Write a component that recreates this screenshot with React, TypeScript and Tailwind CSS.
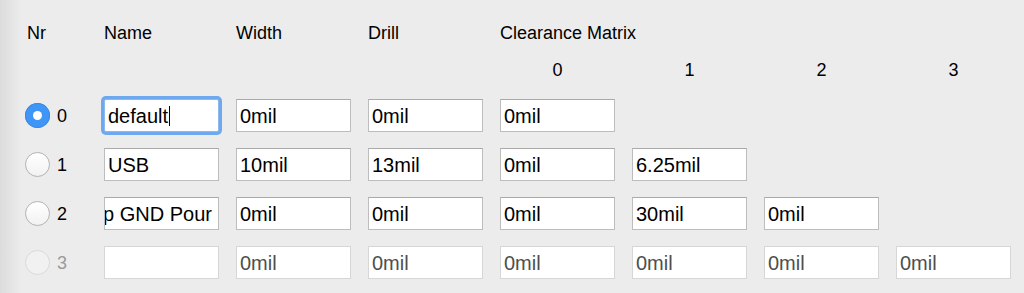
import React from "react";

type Row = {
    nr: number;
    name: string;
    width: string;
    drill: string;
    clearance: string[];
};

const rows: Row[] = [
    { nr: 0, name: "default", width: "0mil", drill: "0mil", clearance: ["0mil"] },
    { nr: 1, name: "USB", width: "10mil", drill: "13mil", clearance: ["0mil", "6.25mil"] },
    { nr: 2, name: "Top GND Pour", width: "0mil", drill: "0mil", clearance: ["0mil", "30mil", "0mil"] },
    { nr: 3, name: "", width: "0mil", drill: "0mil", clearance: ["0mil", "0mil", "0mil", "0mil"] },
];

const font = { fontFamily: '"Liberation Sans", Arial, sans-serif' };

const Field = ({
    value,
    disabled,
    focused,
    alignEnd,
}: {
    value: string;
    disabled?: boolean;
    focused?: boolean;
    alignEnd?: boolean;
}) => (
    <div
        className={
            "relative flex h-[33px] w-[115px] items-center overflow-hidden whitespace-nowrap bg-white text-[20px] leading-none " +
            (alignEnd ? "justify-end pr-[6px] " : "pl-[3px] ") +
            (focused
                ? "rounded-[2px] border border-[#8fb8ec] shadow-[0_0_0_3px_#6ea8ee] "
                : disabled
                  ? "border border-[#d6d6d6] text-[#4e4e4e] "
                  : "border border-[#bdbdbd] border-t-[#a9a9a9] text-black ")
        }
    >
        <span>{value}</span>
        {focused && <span className="ml-[1px] inline-block h-[20px] w-[1px] bg-black" />}
    </div>
);

const Radio = ({ checked, disabled }: { checked?: boolean; disabled?: boolean }) => {
    if (checked) {
        return (
            <div className="flex h-[25px] w-[25px] items-center justify-center rounded-full bg-[#3f96f6] shadow-[inset_0_0_0_1px_#3a8ae6]">
                <div className="h-[9px] w-[9px] rounded-full bg-white" />
            </div>
        );
    }
    return (
        <div
            className={
                "h-[25px] w-[25px] rounded-full " +
                (disabled
                    ? "border border-[#dadada] bg-[#f1f1f1]"
                    : "border border-[#b3b3b3] bg-gradient-to-b from-white to-[#f2f2f2]")
            }
        />
    );
};

export default function App() {
    return (
        <div
            className="h-[293px] w-[1024px] overflow-hidden bg-[linear-gradient(to_right,#dcdcdc,#ececec_22px)] pl-[25px] pt-[23px] text-black"
            style={font}
        >
            {/* headers */}
            <div className="grid h-[20px] grid-cols-[79px_132px_132px_132px_400px] text-[18px] leading-[20px]">
                <div className="pl-[2px]">Nr</div>
                <div>Name</div>
                <div>Width</div>
                <div>Drill</div>
                <div>Clearance Matrix</div>
            </div>

            {/* clearance matrix indices */}
            <div className="mt-[17px] grid h-[20px] grid-cols-[79px_132px_132px_132px_132px_132px_132px_115px] text-[18px] leading-[20px]">
                <div />
                <div />
                <div />
                <div />
                {[0, 1, 2, 3].map((i) => (
                    <div key={i} className="w-[115px] text-center">
                        {i}
                    </div>
                ))}
            </div>

            <div className="mt-[19px] flex flex-col gap-[16px]">
                {rows.map((row) => {
                    const disabled = row.nr === 3;
                    return (
                        <div
                            key={row.nr}
                            className="grid h-[33px] grid-cols-[79px_132px_132px_132px_132px_132px_132px_115px] items-center"
                        >
                            <div className="flex items-center gap-[7px]">
                                <Radio checked={row.nr === 0} disabled={disabled} />
                                <span
                                    className={
                                        "text-[18px] leading-none " +
                                        (disabled ? "text-[#9a9a9a]" : "text-black")
                                    }
                                >
                                    {row.nr}
                                </span>
                            </div>
                            <Field
                                value={row.name}
                                disabled={disabled}
                                focused={row.nr === 0}
                                alignEnd={row.nr === 2}
                            />
                            <Field value={row.width} disabled={disabled} />
                            <Field value={row.drill} disabled={disabled} />
                            {row.clearance.map((c, i) => (
                                <Field key={i} value={c} disabled={disabled} />
                            ))}
                        </div>
                    );
                })}
            </div>
        </div>
    );
}
